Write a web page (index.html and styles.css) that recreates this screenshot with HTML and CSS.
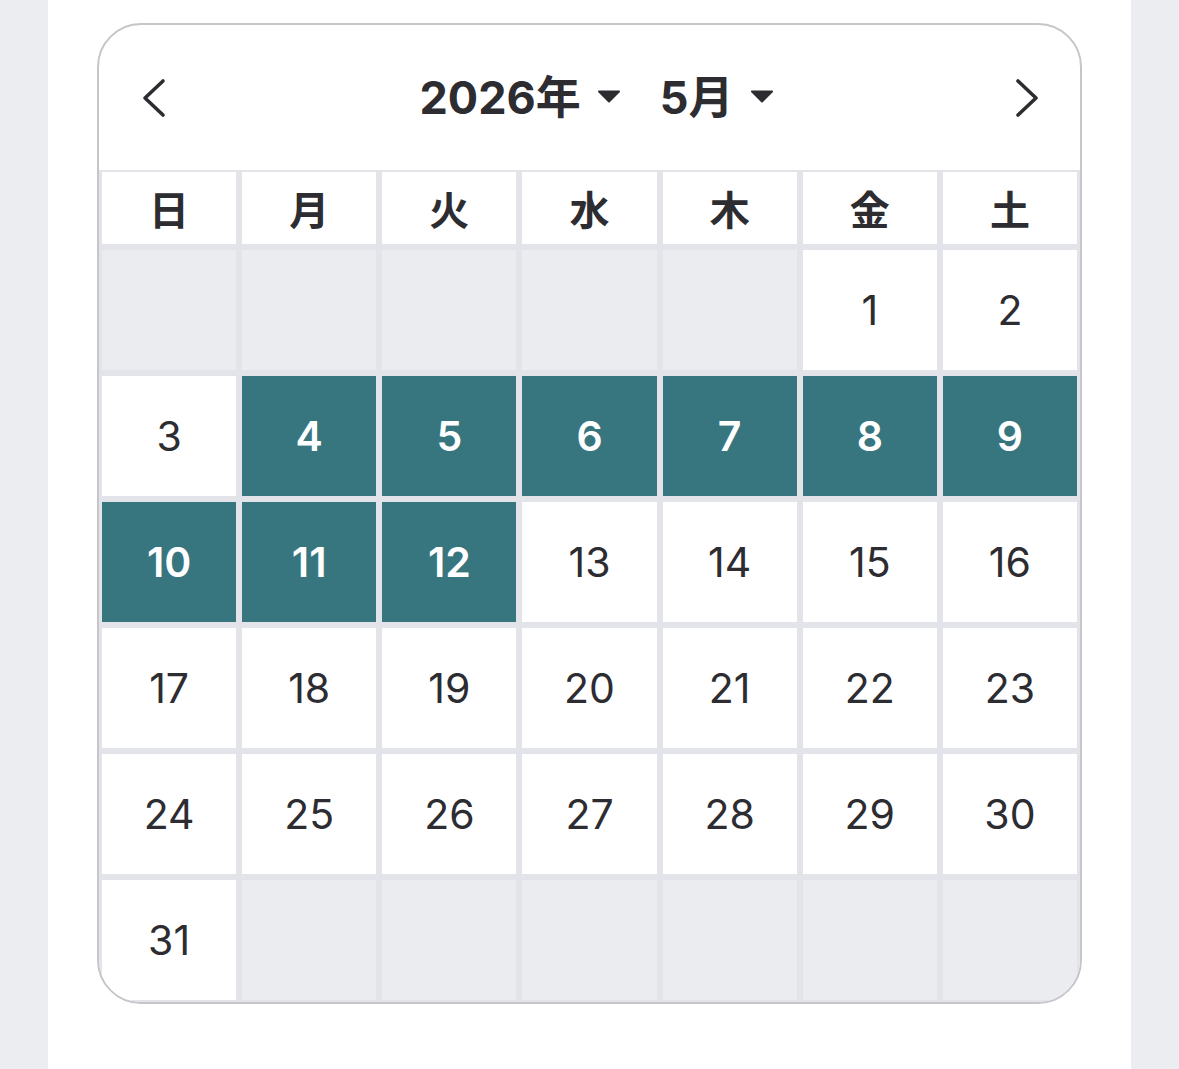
FILE: index.html
```html
<!DOCTYPE html>
<html lang="ja">
<head>
  <meta charset="UTF-8">
  <meta name="viewport" content="width=device-width, initial-scale=1.0">
  <title>カレンダー</title>
  <link rel="stylesheet" href="styles.css">
</head>
<body>
  <div class="panel">
    <div class="calendar">
      <div class="cal-header">
        <button class="nav-btn" aria-label="前の月">
          <svg width="28" height="44" viewBox="0 0 28 44"><path d="M23 5 L5 22 L23 39" fill="none" stroke="#2c2c31" stroke-width="3.6" stroke-linecap="round" stroke-linejoin="round"/></svg>
        </button>
        <div class="cal-title">
          <span class="select">2026年
            <svg class="caret" width="24" height="13" viewBox="0 0 24 13"><path d="M2 1.5 L22 1.5 L12 11.5 Z" fill="#2c2c31" stroke="#2c2c31" stroke-width="2" stroke-linejoin="round"/></svg>
          </span>
          <span class="select">5月
            <svg class="caret" width="24" height="13" viewBox="0 0 24 13"><path d="M2 1.5 L22 1.5 L12 11.5 Z" fill="#2c2c31" stroke="#2c2c31" stroke-width="2" stroke-linejoin="round"/></svg>
          </span>
        </div>
        <button class="nav-btn" aria-label="次の月">
          <svg width="28" height="44" viewBox="0 0 28 44"><path d="M5 5 L23 22 L5 39" fill="none" stroke="#2c2c31" stroke-width="3.6" stroke-linecap="round" stroke-linejoin="round"/></svg>
        </button>
      </div>

      <div class="cal-grid">
        <div class="weekday">日</div>
        <div class="weekday">月</div>
        <div class="weekday">火</div>
        <div class="weekday">水</div>
        <div class="weekday">木</div>
        <div class="weekday">金</div>
        <div class="weekday">土</div>

        <div class="day empty"></div>
        <div class="day empty"></div>
        <div class="day empty"></div>
        <div class="day empty"></div>
        <div class="day empty"></div>
        <div class="day">1</div>
        <div class="day">2</div>

        <div class="day">3</div>
        <div class="day selected">4</div>
        <div class="day selected">5</div>
        <div class="day selected">6</div>
        <div class="day selected">7</div>
        <div class="day selected">8</div>
        <div class="day selected">9</div>

        <div class="day selected">10</div>
        <div class="day selected">11</div>
        <div class="day selected">12</div>
        <div class="day">13</div>
        <div class="day">14</div>
        <div class="day">15</div>
        <div class="day">16</div>

        <div class="day">17</div>
        <div class="day">18</div>
        <div class="day">19</div>
        <div class="day">20</div>
        <div class="day">21</div>
        <div class="day">22</div>
        <div class="day">23</div>

        <div class="day">24</div>
        <div class="day">25</div>
        <div class="day">26</div>
        <div class="day">27</div>
        <div class="day">28</div>
        <div class="day">29</div>
        <div class="day">30</div>

        <div class="day">31</div>
        <div class="day empty"></div>
        <div class="day empty"></div>
        <div class="day empty"></div>
        <div class="day empty"></div>
        <div class="day empty"></div>
        <div class="day empty"></div>
      </div>
    </div>
  </div>
</body>
</html>
```

FILE: styles.css
```css
html, body {
  margin: 0;
  padding: 0;
}
body {
  background-color: #ecedf1;
  font-family: Inter, "Noto Sans CJK JP", sans-serif;
  color: #2c2c31;
}
.panel {
  width: 1083px;
  min-height: 100vh;
  margin: 0 48px;
  padding: 23px 49px 0;
  box-sizing: border-box;
  background-color: #ffffff;
}
.calendar {
  width: 985px;
  border: 2px solid #c5c5ca;
  border-radius: 44px;
  overflow: hidden;
  box-sizing: border-box;
  background-color: #ffffff;
}
.cal-header {
  display: flex;
  align-items: center;
  justify-content: space-between;
  height: 145px;
  padding: 0 39px 0 41px;
}
.nav-btn {
  display: flex;
  align-items: center;
  justify-content: center;
  width: 28px;
  height: 44px;
  padding: 0;
  border: 0;
  background: none;
  cursor: pointer;
}
.cal-title {
  display: flex;
  align-items: center;
  gap: 39px;
  padding-left: 12px;
  font-size: 45px;
  font-weight: 700;
  line-height: 1;
}
.select {
  display: inline-flex;
  align-items: center;
  gap: 16px;
}
.caret {
  display: block;
  margin-top: -2px;
}
.cal-grid {
  display: grid;
  grid-template-columns: repeat(7, 1fr);
  grid-template-rows: 72px repeat(6, 120px);
  gap: 6px;
  padding: 2px 3px 2px;
  background-color: #e3e4e9;
}
.weekday,
.day {
  display: flex;
  align-items: center;
  justify-content: center;
  background-color: #ffffff;
}
.weekday {
  font-size: 40px;
  font-weight: 700;
}
.day {
  font-size: 41px;
  font-weight: 400;
}
.day.empty {
  background-color: #ebecf0;
}
.day.selected {
  background-color: #37767f;
  color: #ffffff;
  font-weight: 600;
}
```
